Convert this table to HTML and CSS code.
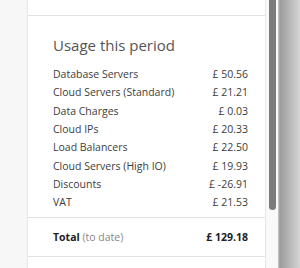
FILE: index.html
```html
<!DOCTYPE html>
<html>
<head>
    <title>Usage this period</title>
    <link rel="stylesheet" href="styles.css">
</head>
<body>
    <div class="frame">
        <div class="gutter"></div>
        <div class="panel">
            <div class="panel-top"></div>
            <div class="usage">
                <h2>Usage this period</h2>
                <table class="usage-table">
                    <tr><td>Database Servers</td><td class="amount">£ 50.56</td></tr>
                    <tr><td>Cloud Servers (Standard)</td><td class="amount">£ 21.21</td></tr>
                    <tr><td>Data Charges</td><td class="amount">£ 0.03</td></tr>
                    <tr><td>Cloud IPs</td><td class="amount">£ 20.33</td></tr>
                    <tr><td>Load Balancers</td><td class="amount">£ 22.50</td></tr>
                    <tr><td>Cloud Servers (High IO)</td><td class="amount">£ 19.93</td></tr>
                    <tr><td>Discounts</td><td class="amount">£ -26.91</td></tr>
                    <tr><td>VAT</td><td class="amount">£ 21.53</td></tr>
                </table>
            </div>
            <div class="total">
                <span><b>Total</b> <span class="muted">(to date)</span></span>
                <b>£ 129.18</b>
            </div>
        </div>
        <div class="scrollbar">
            <div class="thumb"></div>
        </div>
        <div class="window-edge"></div>
    </div>
</body>
</html>
```

FILE: styles.css
```css
body {
    margin: 0;
    font-family: "Open Sans", sans-serif;
    color: #3d3d3d;
}
.frame {
    display: flex;
    height: 268px;
    overflow: hidden;
}
.gutter {
    width: 27px;
    background-color: #f7f7f7;
    border-right: 1px solid #e6e6e6;
}
.panel {
    flex: 1;
    background-color: #fff;
}
.panel-top {
    height: 15px;
    border-bottom: 1px solid #e2e2e2;
}
.usage {
    padding: 19px 17px 6px 25px;
}
.usage h2 {
    margin: 0 0 10px;
    font-size: 15px;
    font-weight: normal;
    color: #555;
}
.usage-table {
    width: 100%;
    border-collapse: collapse;
    font-size: 10.5px;
}
.usage-table td {
    padding: 0;
    height: 18.3px;
}
.amount {
    text-align: right;
}
.total {
    display: flex;
    justify-content: space-between;
    align-items: center;
    height: 38px;
    padding: 0 17px 0 25px;
    border-top: 1px solid #e2e2e2;
    border-bottom: 1px solid #e2e2e2;
    font-size: 10.5px;
    color: #222;
}
.muted {
    color: #888;
}
.scrollbar {
    width: 12px;
    background-color: #f9f9f9;
    border-left: 1px solid #e6e6e6;
    display: flex;
    justify-content: center;
}
.thumb {
    width: 7px;
    height: 210px;
    background-color: #7c7c7c;
    border-radius: 0 0 4px 4px;
}
.window-edge {
    width: 22px;
    background: linear-gradient(to right, #c8c8c8 0, #9c9c9c 2px, #d4d4d4 100%);
}
```
